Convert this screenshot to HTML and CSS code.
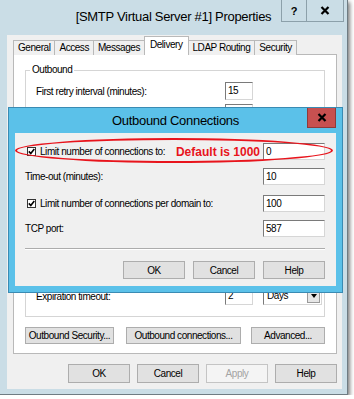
FILE: index.html
```html
<!DOCTYPE html>
<html lang="en">
<head>
  <meta charset="UTF-8">
  <title>SMTP Virtual Server Properties</title>
  <link rel="stylesheet" href="styles.css">
</head>
<body>
  <div class="window">
    <div class="titlebar">
      <div class="title">[SMTP Virtual Server #1] Properties</div>
      <div class="caption-btns">
        <span class="cap help">?</span>
        <span class="cap close">
          <svg width="10" height="9" viewBox="0 0 10 9"><path d="M1.5 1 L8.5 8 M8.5 1 L1.5 8" stroke="#000" stroke-width="2.2"/></svg>
        </span>
      </div>
    </div>

    <div class="client">
      <div class="tabs">
        <div class="tab">General</div>
        <div class="tab">Access</div>
        <div class="tab">Messages</div>
        <div class="tab active">Delivery</div>
        <div class="tab">LDAP Routing</div>
        <div class="tab">Security</div>
      </div>

      <div class="panel">
        <div class="group">
          <span class="legend">Outbound</span>
          <div class="row"><span>First retry interval (minutes):</span><span class="input">15</span></div>
          <!-- rest of the rows sit under the child dialog -->
          <div class="row"><span></span><span class="input"></span></div>
          <div class="row push">
            <span>Expiration timeout:</span><span class="input">2</span>
            <span class="select">Days<span class="arrow"></span></span>
          </div>
        </div>
        <div class="panel-btns">
          <button class="btn b-sec">Outbound Security...</button>
          <button class="btn b-conn">Outbound connections...</button>
          <button class="btn b-adv">Advanced...</button>
        </div>
      </div>

      <div class="dlg-btns">
        <button class="btn">OK</button>
        <button class="btn">Cancel</button>
        <button class="btn disabled">Apply</button>
        <button class="btn">Help</button>
      </div>
    </div>

    <!-- child dialog on top of the properties window -->
    <div class="modal">
      <div class="modal-title">
        <div class="mtitle">Outbound Connections</div>
        <span class="modal-close">
          <svg width="10" height="9" viewBox="0 0 10 9"><path d="M1.5 1 L8.5 8 M8.5 1 L1.5 8" stroke="#000" stroke-width="2.2"/></svg>
        </span>
      </div>
      <div class="modal-body">
        <div class="ring"></div>
        <div class="mrow">
          <span class="chk"><svg width="7" height="7" viewBox="0 0 7 7"><path d="M0.8 3.4 L2.8 5.6 L6.3 1" fill="none" stroke="#000" stroke-width="1.6"/></svg></span>
          <span>Limit number of connections to:</span>
          <span class="note">Default is 1000</span>
          <span class="input minput">0</span>
        </div>
        <div class="mrow r2">
          <span>Time-out (minutes):</span>
          <span class="input minput">10</span>
        </div>
        <div class="mrow r3">
          <span class="chk"><svg width="7" height="7" viewBox="0 0 7 7"><path d="M0.8 3.4 L2.8 5.6 L6.3 1" fill="none" stroke="#000" stroke-width="1.6"/></svg></span>
          <span>Limit number of connections per domain to:</span>
          <span class="input minput">100</span>
        </div>
        <div class="mrow r4">
          <span>TCP port:</span>
          <span class="input minput">587</span>
        </div>
        <div class="sep"></div>
        <div class="modal-btns">
          <button class="btn">OK</button>
          <button class="btn">Cancel</button>
          <button class="btn">Help</button>
        </div>
      </div>
    </div>
  </div>
</body>
</html>
```

FILE: styles.css
```css
* {
  box-sizing: border-box;
}
body {
  margin: 0;
  background: #fff;
  font-family: "Liberation Sans", Arial, sans-serif;
  font-size: 10px;
  letter-spacing: -0.45px;
  color: #000;
}
.window {
  position: relative;
  width: 348px;
  height: 395px;
  background: #cadde6;
  border-right: 1px solid #6f7c83;
  border-bottom: 1px solid #6f7c83;
  box-shadow: 2px 2px 4px rgba(0, 0, 0, 0.5);
  display: flex;
  flex-direction: column;
}
.titlebar {
  height: 35px;
  display: grid;
  grid-template-columns: 1fr auto 1fr;
  align-items: start;
}
.title {
  grid-column: 2;
  font-size: 13px;
  letter-spacing: -0.3px;
  line-height: 34px;
  white-space: nowrap;
}
.caption-btns {
  grid-column: 3;
  justify-self: end;
  display: flex;
  margin-right: 3px;
}
.cap {
  height: 22px;
  border: 1px solid #8ca0aa;
  border-top: none;
  display: flex;
  align-items: center;
  justify-content: center;
}
.cap.help {
  width: 25px;
  border-right: none;
  font-weight: bold;
  font-size: 11px;
}
.cap.close {
  width: 38px;
}
.client {
  flex: 1;
  margin: 0 5px 5px 7px;
  background: #f0f0f0;
  padding: 1px 5px 0 6px;
}
.tabs {
  display: flex;
  align-items: flex-end;
  height: 19px;
}
.tab {
  height: 15px;
  padding: 0 4px;
  border: 1px solid #b9b9b9;
  border-bottom: none;
  margin-right: -1px;
  background: #f0f0f0;
  line-height: 14px;
  white-space: nowrap;
}
.tab.active {
  height: 19px;
  padding: 0 5px;
  background: #fff;
  position: relative;
  z-index: 1;
  line-height: 16px;
}
.panel {
  margin-top: -1px;
  height: 300px;
  border: 1px solid #b9b9b9;
  background: #fff;
  padding: 0 11px;
}
.group {
  position: relative;
  margin-top: 15px;
  height: 247px;
  border: 1px solid #d5d5d5;
  padding: 11px 0 11px 10px;
  display: flex;
  flex-direction: column;
  gap: 4px;
}
.legend {
  position: absolute;
  top: -7px;
  left: 4px;
  padding: 0 2px;
  background: #fff;
  line-height: 12px;
}
.row {
  display: grid;
  grid-template-columns: 179px 28px 59px;
  column-gap: 10px;
  align-items: center;
  height: 18px;
  white-space: nowrap;
}
.row.push {
  margin-top: auto;
}
.input {
  display: block;
  height: 18px;
  background: #fff;
  border: 1px solid;
  border-color: #7a7a7a #d6d6d6 #d6d6d6 #7a7a7a;
  padding-left: 2px;
  line-height: 16px;
}
.select {
  display: flex;
  justify-content: space-between;
  height: 18px;
  background: #fff;
  border: 1px solid;
  border-color: #7a7a7a #d6d6d6 #d6d6d6 #7a7a7a;
  padding: 1px 1px 1px 3px;
  line-height: 14px;
}
.arrow {
  width: 13px;
  height: 14px;
  background: #e6e6e6;
  border: 1px solid #9a9a9a;
  display: flex;
  align-items: center;
  justify-content: center;
}
.arrow::after {
  content: "";
  border-left: 3.5px solid transparent;
  border-right: 3.5px solid transparent;
  border-top: 4px solid #000;
}
.btn {
  display: flex;
  align-items: center;
  justify-content: center;
  padding: 0;
  height: 19px;
  width: 62px;
  border: 1px solid #adadad;
  background: #e1e1e1;
  font: inherit;
  letter-spacing: inherit;
  color: #000;
  white-space: nowrap;
}
.btn.disabled {
  background: #f4f4f4;
  border-color: #c4c4c4;
  color: #a3a3a3;
}
.panel-btns {
  display: flex;
  margin-top: 10px;
}
.panel-btns .btn {
  height: 17px;
}
.b-sec {
  width: 89px;
}
.b-conn {
  width: 115px;
  margin-left: 12px;
}
.b-adv {
  width: 74px;
  margin-left: 10px;
}
.dlg-btns {
  display: flex;
  justify-content: flex-end;
  gap: 7px;
  margin-top: 10px;
}

/* Outbound Connections dialog */
.modal {
  position: absolute;
  left: 8px;
  top: 107px;
  width: 335px;
  height: 186px;
  background: #5bc1e9;
  border: 1px solid #3a8bb3;
  padding: 0 6px 6px;
  display: flex;
  flex-direction: column;
}
.modal-title {
  height: 25px;
  display: grid;
  grid-template-columns: 1fr auto 1fr;
  align-items: start;
}
.mtitle {
  grid-column: 2;
  font-size: 13px;
  letter-spacing: -0.3px;
  line-height: 26px;
  white-space: nowrap;
}
.modal-close {
  grid-column: 3;
  justify-self: end;
  width: 29px;
  height: 20px;
  background: #c75050;
  border: 1px solid #8f3a3a;
  border-top: none;
  display: flex;
  align-items: center;
  justify-content: center;
}
.modal-body {
  position: relative;
  flex: 1;
  background: #f0f0f0;
  padding: 10px 11px 0 10px;
}
.ring {
  position: absolute;
  left: 0;
  top: 5px;
  width: 318px;
  height: 25px;
  border: 2px solid #e8141c;
  border-radius: 50%;
}
.mrow {
  display: flex;
  align-items: center;
  height: 17px;
  white-space: nowrap;
}
.mrow.r2 {
  margin-top: 8px;
}
.mrow.r3 {
  margin-top: 10px;
}
.mrow.r4 {
  margin-top: 8px;
}
.minput {
  width: 62px;
  height: 17px;
  margin-left: auto;
  line-height: 15px;
}
.note + .minput {
  margin-left: 0;
}
.chk {
  width: 9px;
  height: 9px;
  margin: 0 4px 0 2px;
  border: 1px solid #333;
  background: #fff;
  display: flex;
  align-items: center;
  justify-content: center;
}
.note {
  margin-left: auto;
  margin-right: 3px;
  color: #e8141c;
  font-weight: bold;
  font-size: 12px;
  letter-spacing: 0;
}
.sep {
  margin-top: 11px;
  border-top: 1px solid #acacac;
  border-bottom: 1px solid #fff;
}
.modal-btns {
  display: flex;
  justify-content: flex-end;
  gap: 8px;
  margin-top: 11px;
}
.modal-btns .btn {
  height: 18px;
}
```
